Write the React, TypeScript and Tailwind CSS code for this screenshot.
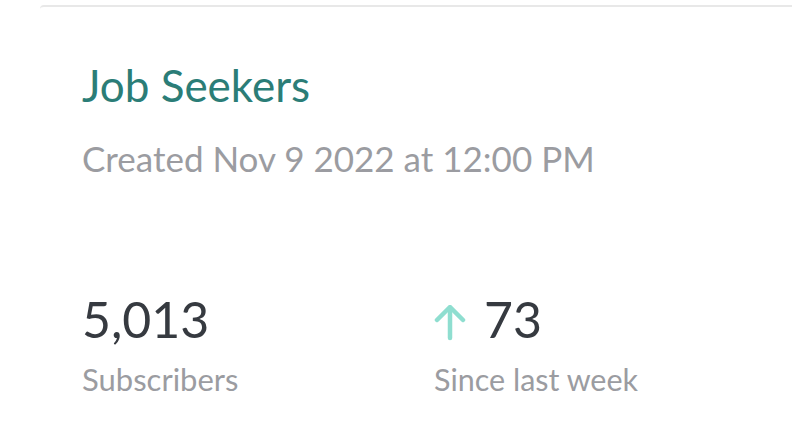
export default function App() {
  return (
    <div className="w-[792px] h-[448px] overflow-hidden bg-white pt-[5px] pl-[40px]" style={{ fontFamily: 'Lato, "Noto Sans", sans-serif' }}>
      <div className="border-t-2 border-[#e8e8e8] rounded-tl-[4px] w-[800px] pl-[42px] pt-[52px]">
        <h1 className="text-[44px] leading-[52px] text-[#2b7d77] font-normal">Job Seekers</h1>
        <p className="mt-[26px] text-[35px] leading-[42px] text-[#9b9ca1]">Created Nov 9 2022 at 12:00 PM</p>
        <div className="mt-[115px] grid grid-cols-[352px_1fr]">
          <div>
            <div className="text-[50px] leading-[50px] text-[#363a40]">5,013</div>
            <div className="mt-[17px] text-[31px] leading-[36px] text-[#9b9ca1]">Subscribers</div>
          </div>
          <div>
            <div className="flex items-start gap-[16px]">
              <svg className="mt-[11px]" width="34" height="36" viewBox="0 0 34 36" fill="none" stroke="#8fded0" strokeWidth="4.5" strokeLinecap="round" strokeLinejoin="round">
                <path d="M16 33V3" />
                <path d="M3 15L16 2L29 15" />
              </svg>
              <span className="text-[50px] leading-[50px] text-[#363a40]">73</span>
            </div>
            <div className="mt-[17px] text-[30.5px] leading-[36px] text-[#9b9ca1]">Since last week</div>
          </div>
        </div>
      </div>
    </div>
  );
}
